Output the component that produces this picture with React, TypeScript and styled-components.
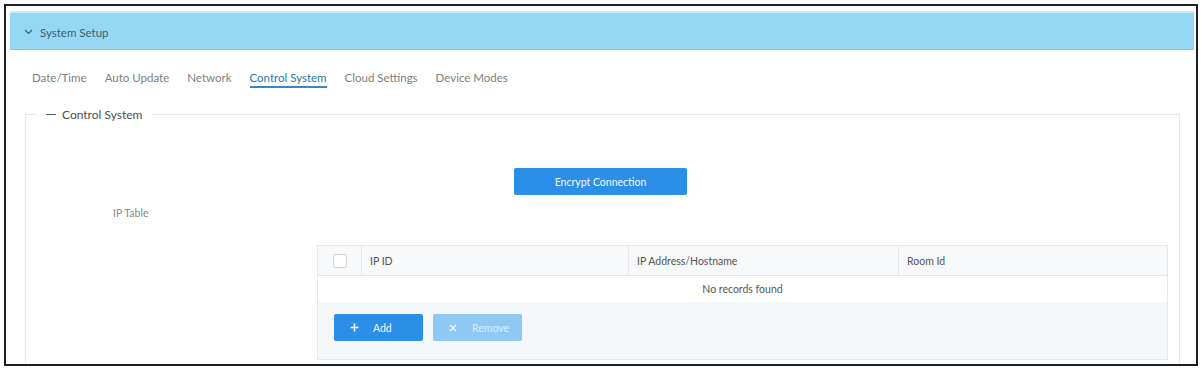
import React from "react";
import styled, { createGlobalStyle } from "styled-components";

const Global = createGlobalStyle`
  html, body { margin: 0; padding: 0; background: #ffffff; }
  body { font-family: Lato, "Open Sans", "Liberation Sans", sans-serif; }
  * { box-sizing: border-box; }
`;

const Frame = styled.div`
  margin: 4px 3px 0 4px;
  height: 362px;
  border: 2px solid #1f1f1f;
  padding: 5px 2px 0 4px;
  background: #fff;
  overflow: hidden;
`;

const Panel = styled.section`
  display: flex;
  flex-direction: column;
  height: 100%;
`;

const Header = styled.div`
  height: 39px;
  background: #96d8f4;
  border-top: 2px solid #c9ecfa;
  border-bottom: 1px solid #86c6e2;
  display: flex;
  align-items: center;
  padding-left: 14px;
  padding-top: 2px;
  gap: 7px;
  color: #3f5f70;
  font-size: 11.5px;
`;

const Tabs = styled.nav`
  display: flex;
  gap: 18px;
  padding: 21px 0 0 22px;
  height: 57px;
  align-items: flex-start;
`;

const Tab = styled.div<{ $active?: boolean }>`
  font-size: 11.5px;
  color: ${(p) => (p.$active ? "#2b77ad" : "#808080")};
  padding-bottom: 2px;
  border-bottom: 2px solid ${(p) => (p.$active ? "#3a86bd" : "transparent")};
`;

const Fieldset = styled.fieldset`
  margin: 0 14px 0 15px;
  padding: 0;
  border: 1px solid #e8e8e8;
  border-bottom: none;
  flex: 1;
  min-width: 0;
`;

const Legend = styled.legend`
  margin-left: 11px;
  padding: 0 9px;
  display: flex;
  align-items: center;
  gap: 6px;
  font-size: 12px;
  color: #4d4d4d;
`;

const Dash = styled.span`
  display: inline-block;
  width: 10px;
  height: 1.5px;
  background: #555;
`;

const Body = styled.div`
  display: flex;
  flex-direction: column;
  padding-top: 46px;
`;

const CenterRow = styled.div`
  display: flex;
  justify-content: center;
`;

const PrimaryButton = styled.button`
  width: 173px;
  height: 27px;
  border: none;
  border-radius: 2px;
  background: #2b8fe8;
  color: #f4f9ff;
  font-family: inherit;
  font-size: 10.5px;
  padding: 0;
  margin-left: -4px;
`;

const FormRow = styled.div`
  display: grid;
  grid-template-columns: 291px 1fr;
  padding-top: 12px;
  padding-right: 11px;
`;

const Label = styled.div`
  padding-left: 87px;
  font-size: 10.5px;
  color: #8a8a8a;
  line-height: 12px;
`;

const TableWrap = styled.div`
  padding-top: 38px;
`;

const Table = styled.div`
  border: 1px solid #e6e9ec;
  background: #fff;
`;

const HeadRow = styled.div`
  display: grid;
  grid-template-columns: 43px 267px 270px 1fr;
  height: 30px;
  background: #f7f9fb;
  border-bottom: 1px solid #e3e6e9;
`;

const HeadCell = styled.div<{ $first?: boolean }>`
  display: flex;
  align-items: center;
  justify-content: ${(p) => (p.$first ? "center" : "flex-start")};
  padding-left: ${(p) => (p.$first ? "0" : "8px")};
  border-left: ${(p) => (p.$first ? "none" : "1px solid #e6e9ec")};
  font-size: 10.5px;
  color: #555;
`;

const Checkbox = styled.span`
  width: 14px;
  height: 14px;
  border: 1px solid #cfd3d6;
  border-radius: 2px;
  background: #fff;
`;

const EmptyRow = styled.div`
  height: 26px;
  display: flex;
  align-items: center;
  justify-content: center;
  font-size: 10.5px;
  color: #555;
`;

const Footer = styled.div`
  background: #f5f8fb;
  height: 57px;
  display: flex;
  gap: 10px;
  padding: 12px 0 0 16px;
`;

const ActionButton = styled.button<{ $disabled?: boolean }>`
  width: 89px;
  height: 27px;
  border: none;
  border-radius: 2px;
  background: ${(p) => (p.$disabled ? "#8fc8f3" : "#2b8fe8")};
  color: ${(p) => (p.$disabled ? "#dcefff" : "#f4f9ff")};
  font-family: inherit;
  font-size: 10.5px;
  display: flex;
  align-items: center;
  padding: 0 0 0 15px;
  gap: 14px;
`;

const IconBox = styled.span`
  display: inline-flex;
  width: 10px;
  justify-content: center;
`;

export default function App() {
  return (
    <>
      <Global />
      <Frame>
        <Panel>
          <Header>
            <svg width="9" height="6" viewBox="0 0 9 6">
              <path d="M1 1 L4.5 4.5 L8 1" fill="none" stroke="#3f5f70" strokeWidth="1.2" />
            </svg>
            <span>System Setup</span>
          </Header>
          <Tabs>
            <Tab>Date/Time</Tab>
            <Tab>Auto Update</Tab>
            <Tab>Network</Tab>
            <Tab $active>Control System</Tab>
            <Tab>Cloud Settings</Tab>
            <Tab>Device Modes</Tab>
          </Tabs>
          <Fieldset>
            <Legend>
              <Dash />
              <span>Control System</span>
            </Legend>
            <Body>
              <CenterRow>
                <PrimaryButton>Encrypt Connection</PrimaryButton>
              </CenterRow>
              <FormRow>
                <Label>IP Table</Label>
                <TableWrap>
                  <Table>
                    <HeadRow>
                      <HeadCell $first>
                        <Checkbox />
                      </HeadCell>
                      <HeadCell>IP ID</HeadCell>
                      <HeadCell>IP Address/Hostname</HeadCell>
                      <HeadCell>Room Id</HeadCell>
                    </HeadRow>
                    <EmptyRow>No records found</EmptyRow>
                    <Footer>
                      <ActionButton>
                        <IconBox>
                          <svg width="9" height="9" viewBox="0 0 9 9">
                            <path d="M4.5 0.5 V8.5 M0.5 4.5 H8.5" stroke="#fff" strokeWidth="1.6" />
                          </svg>
                        </IconBox>
                        <span>Add</span>
                      </ActionButton>
                      <ActionButton $disabled>
                        <IconBox>
                          <svg width="8" height="8" viewBox="0 0 8 8">
                            <path d="M1 1 L7 7 M7 1 L1 7" stroke="#e8f4ff" strokeWidth="1.5" />
                          </svg>
                        </IconBox>
                        <span>Remove</span>
                      </ActionButton>
                    </Footer>
                  </Table>
                </TableWrap>
              </FormRow>
            </Body>
          </Fieldset>
        </Panel>
      </Frame>
    </>
  );
}
